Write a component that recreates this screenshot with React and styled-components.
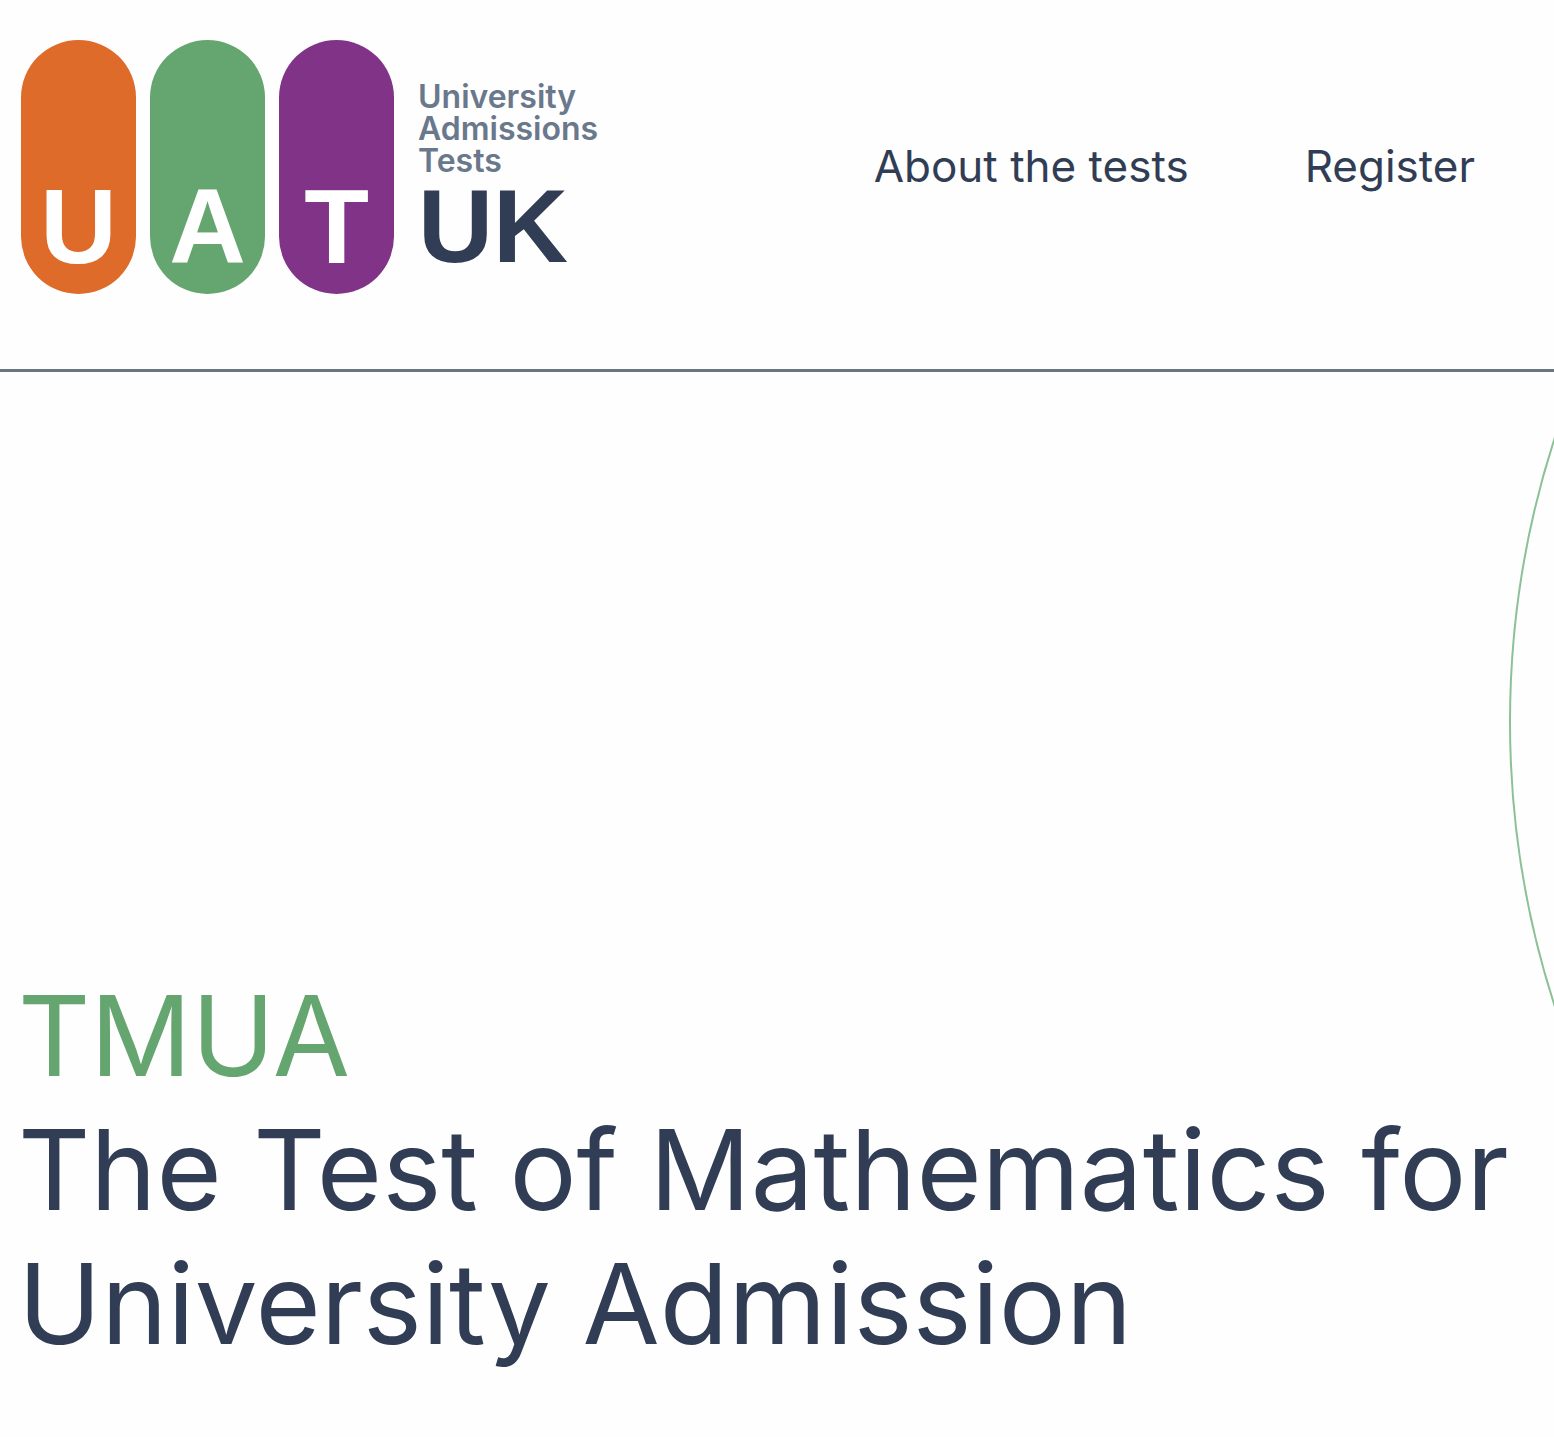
import React from 'react'
import styled, { createGlobalStyle } from 'styled-components'

const colors = {
  navy: '#313d54',
  slate: '#6a788c',
  rule: '#6b7780',
  orange: '#de6b2a',
  green: '#64a570',
  purple: '#813388',
}

const GlobalStyle = createGlobalStyle`
  * {
    box-sizing: border-box;
  }

  body {
    margin: 0;
    background: #fefefe;
    color: ${colors.navy};
    font-family: Inter, 'Open Sans', sans-serif;
  }
`

const Header = styled.header`
  display: flex;
  justify-content: space-between;
  align-items: flex-start;
  padding: 40px 79px 75px 21px;
  border-bottom: 3px solid ${colors.rule};
`

const Logo = styled.a`
  display: flex;
  gap: 14px;
  color: inherit;
  text-decoration: none;
`

const Pill = styled.span`
  display: flex;
  justify-content: center;
  align-items: flex-end;
  width: 115px;
  height: 254px;
  padding-bottom: 19px;
  border-radius: 58px;
  background: ${props => props.$color};
  color: #fff;
  font: bold 106px/98px 'Liberation Sans', sans-serif;
`

const LogoName = styled.span`
  display: flex;
  flex-direction: column;
  justify-content: flex-end;
  padding: 0 0 19px 10px;
`

const LogoWords = styled.span`
  color: ${colors.slate};
  font-size: 32px;
  font-weight: 600;
  line-height: 32px;
`

const LogoCountry = styled.span`
  font: bold 104px/98px 'Liberation Sans', sans-serif;
`

const Nav = styled.nav`
  display: flex;
  gap: 116px;
  padding-top: 94px;
`

const NavLink = styled.a`
  color: inherit;
  font-size: 44px;
  line-height: 64px;
  text-decoration: none;
`

const Hero = styled.section`
  position: relative;
  overflow: hidden;
  padding: 596px 18px 80px;
`

const Ring = styled.div`
  position: absolute;
  top: -575px;
  left: calc(100% - 45px);
  width: 1850px;
  height: 1850px;
  border: 2px solid #8cc198;
  border-radius: 50%;
`

const Title = styled.h1`
  margin: 0;
  font-size: 112px;
  font-weight: 400;
  line-height: 134px;
`

const Acronym = styled.span`
  display: block;
  color: ${colors.green};
`

const letters = [
  { letter: 'U', color: colors.orange },
  { letter: 'A', color: colors.green },
  { letter: 'T', color: colors.purple },
]

function UatLogo () {
  return (
    <Logo href="#home">
      {letters.map(({ letter, color }) => (
        <Pill key={letter} $color={color}>{letter}</Pill>
      ))}
      <LogoName>
        <LogoWords>University<br/>Admissions<br/>Tests</LogoWords>
        <LogoCountry>UK</LogoCountry>
      </LogoName>
    </Logo>
  )
}

function App () {
  return (
    <>
      <GlobalStyle/>
      <Header>
        <UatLogo/>
        <Nav>
          <NavLink href="#tests">About the tests</NavLink>
          <NavLink href="#register">Register</NavLink>
        </Nav>
      </Header>
      <main>
        <Hero>
          <Ring/>
          <Title>
            <Acronym>TMUA</Acronym>
            The Test of Mathematics for University Admission
          </Title>
        </Hero>
      </main>
    </>
  )
}

export default App
